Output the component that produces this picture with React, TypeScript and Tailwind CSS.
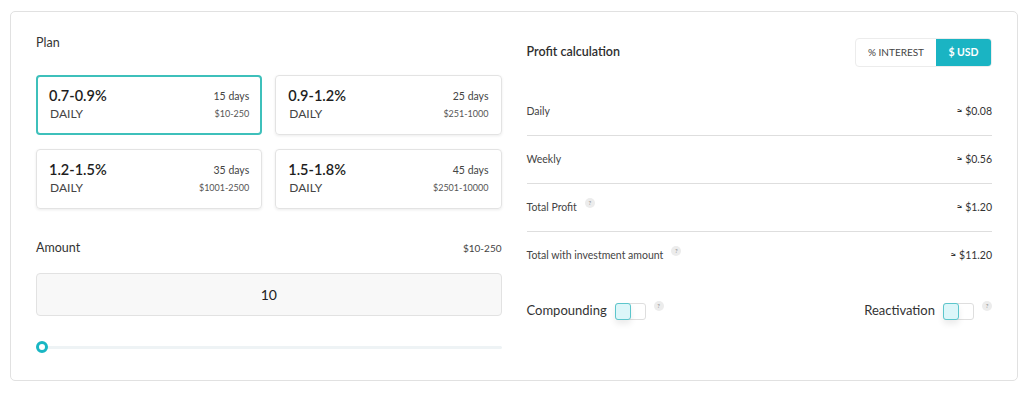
import React from "react";

const plans = [
  { rate: "0.7-0.9%", days: "15 days", range: "$10-250", active: true },
  { rate: "0.9-1.2%", days: "25 days", range: "$251-1000", active: false },
  { rate: "1.2-1.5%", days: "35 days", range: "$1001-2500", active: false },
  { rate: "1.5-1.8%", days: "45 days", range: "$2501-10000", active: false },
];

const rows = [
  { label: "Daily", value: "≈ $0.08", hint: false },
  { label: "Weekly", value: "≈ $0.56", hint: false },
  { label: "Total Profit", value: "≈ $1.20", hint: true },
  { label: "Total with investment amount", value: "≈ $11.20", hint: true },
];

function Hint() {
  return (
    <span className="ml-[8px] -mt-[10px] inline-flex h-[10px] w-[10px] items-center justify-center rounded-full bg-[#ececec] text-[6px] leading-none text-[#8a8a8a]">
      ?
    </span>
  );
}

function Toggle() {
  return (
    <div className="flex h-[17px] w-[31px] rounded-[3px] border border-[#dedede] bg-white">
      <div className="h-[17px] w-[16px] -mt-px -ml-px rounded-[3px] border border-[#5cc6cc] bg-[#dcf6f9] shadow-[0_4px_6px_rgba(0,0,0,0.08)]" />
    </div>
  );
}

export default function App() {
  return (
    <div className="h-[393px] w-[1024px] bg-white pl-[10px] pt-[11px] font-['Lato',sans-serif] text-[#2b2b2b]">
      <div className="flex h-[370px] w-[1008px] gap-[25px] rounded-[5px] border border-[#e1e1e1] px-[25px] pt-[23px]">
        {/* left column */}
        <div className="flex w-[466px] flex-col">
          <div className="h-[16px] text-[12.5px] leading-[16px] text-[#333]">Plan</div>
          <div className="mt-[24px] grid grid-cols-2 gap-x-[13px] gap-y-[14px]">
            {plans.map((p) => (
              <div
                key={p.rate}
                className={
                  p.active
                    ? "flex h-[60px] items-center justify-between rounded-[4px] border-2 border-[#3ec0bb] px-[11px] pb-[2px]"
                    : "flex h-[60px] items-center justify-between rounded-[4px] border border-[#e3e3e3] px-[12px] pb-[2px] shadow-[0_1px_3px_rgba(0,0,0,0.08)]"
                }
              >
                <div className="flex flex-col">
                  <span className="text-[14.5px] font-semibold leading-[18px] text-[#1e1e1e]">{p.rate}</span>
                  <span className="mt-[1px] pl-[1px] text-[12px] leading-[16px] text-[#444]">DAILY</span>
                </div>
                <div className="flex flex-col items-end">
                  <span className="text-[10.5px] leading-[18px] text-[#444]">{p.days}</span>
                  <span className="mt-[1px] text-[9px] leading-[16px] text-[#555]">{p.range}</span>
                </div>
              </div>
            ))}
          </div>
          <div className="mt-[31px] flex h-[16px] items-center justify-between">
            <span className="text-[12.5px] text-[#333]">Amount</span>
            <span className="text-[10px] text-[#444]">$10-250</span>
          </div>
          <div className="mt-[17px] flex h-[43px] items-center justify-center rounded-[4px] border border-[#e2e2e2] bg-[#f8f8f8] text-[14px] text-[#222]">
            10
          </div>
          <div className="relative mt-[25px] h-[12px]">
            <div className="absolute left-[6px] right-0 top-[5px] h-[3px] rounded-full bg-[#eef3f5]" />
            <div className="absolute left-0 top-0 h-[12px] w-[12px] rounded-full border-[3px] border-[#19b6c3] bg-white" />
          </div>
        </div>

        {/* right column */}
        <div className="flex w-[466px] flex-col">
          <div className="mt-[3px] flex h-[29px] items-center justify-between">
            <span className="text-[12.5px] font-semibold text-[#2e2e2e]">Profit calculation</span>
            <div className="flex h-[29px] overflow-hidden rounded-[4px] border border-[#ececec]">
              <div className="flex w-[80px] items-center justify-center text-[10px] text-[#444]">% INTEREST</div>
              <div className="flex w-[55px] items-center justify-center bg-[#1ab4c3] text-[10.5px] font-bold text-white">
                $ USD
              </div>
            </div>
          </div>
          <div className="mt-[21px] flex flex-col">
            {rows.map((r, i) => (
              <div
                key={r.label}
                className={
                  i < rows.length - 1
                    ? "flex h-[48px] items-center justify-between border-b border-[#dedede]"
                    : "flex h-[47px] items-center justify-between"
                }
              >
                <span className="flex items-center text-[10.5px] text-[#444]">
                  {r.label}
                  {r.hint && <Hint />}
                </span>
                <span className="text-[10.5px] text-[#333]">{r.value}</span>
              </div>
            ))}
          </div>
          <div className="mt-[22px] flex h-[20px] items-center justify-between">
            <div className="flex items-center">
              <span className="mr-[8px] text-[13px] text-[#333]">Compounding</span>
              <Toggle />
              <Hint />
            </div>
            <div className="flex items-center">
              <span className="mr-[8px] text-[13px] text-[#333]">Reactivation</span>
              <Toggle />
              <Hint />
            </div>
          </div>
        </div>
      </div>
    </div>
  );
}
